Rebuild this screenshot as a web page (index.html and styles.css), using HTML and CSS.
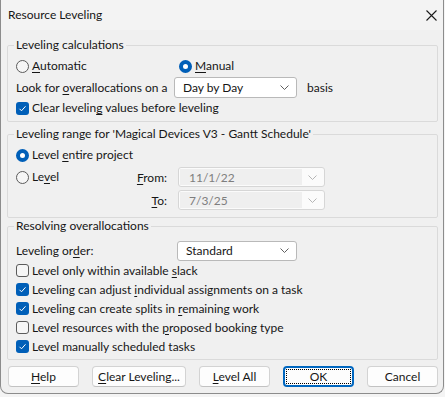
FILE: index.html
```html
<!DOCTYPE html>
<html>
<head>
<meta charset="utf-8">
<link rel="stylesheet" href="styles.css">
</head>
<body>
<div class="dialog">
  <div class="titlebar">
    <span class="title">Resource Leveling</span>
    <svg class="close" width="11" height="11" viewBox="0 0 11 11"><path d="M0.5 0.5 L10.5 10.5 M10.5 0.5 L0.5 10.5" stroke="#1b1b1b" stroke-width="1.1" fill="none"/></svg>
  </div>
  <div class="body">
    <fieldset class="group g1">
      <legend>Leveling calculations</legend>
      <div class="row radios">
        <label class="opt auto"><span class="radio"></span><span><u>A</u>utomatic</span></label>
        <label class="opt"><span class="radio on"></span><span><u>M</u>anual</span></label>
      </div>
      <div class="row look">
        <span class="look-label">Look for <u>o</u>verallocations on a</span>
        <div class="combo combo-day"><span>Day by Day</span><svg class="chev" width="9" height="5" viewBox="0 0 9 5"><path d="M0.5 0.5 L4.5 4.5 L8.5 0.5" stroke="#5f5f5f" fill="none"/></svg></div>
        <span class="basis">basis</span>
      </div>
      <div class="row">
        <label class="opt"><span class="check on"><svg width="13" height="13" viewBox="0 0 13 13"><path d="M3.5 6.8 L5.5 8.8 L9.5 4.3" stroke="#fff" stroke-width="1" fill="none"/></svg></span><span>Clear levelin<u>g</u> values before leveling</span></label>
      </div>
    </fieldset>

    <fieldset class="group g2">
      <legend>Leveling range for 'Magical Devices V3 - Gantt Schedule'</legend>
      <div class="row">
        <label class="opt"><span class="radio on"></span><span>Level <u>e</u>ntire project</span></label>
      </div>
      <div class="range">
        <label class="opt"><span class="radio"></span><span>Le<u>v</u>el</span></label>
        <span class="rlabel"><u>F</u>rom:</span>
        <div class="combo disabled"><span class="field">11/1/22</span><svg class="chev" width="9" height="5" viewBox="0 0 9 5"><path d="M0.5 0.5 L4.5 4.5 L8.5 0.5" stroke="#b5b5b5" fill="none"/></svg></div>
        <span></span>
        <span class="rlabel"><u>T</u>o:</span>
        <div class="combo disabled"><span class="field">7/3/25</span><svg class="chev" width="9" height="5" viewBox="0 0 9 5"><path d="M0.5 0.5 L4.5 4.5 L8.5 0.5" stroke="#b5b5b5" fill="none"/></svg></div>
      </div>
    </fieldset>

    <fieldset class="group g3">
      <legend>Resolving overallocations</legend>
      <div class="row order">
        <span class="order-label">Leveling or<u>d</u>er:</span>
        <div class="combo combo-order"><span>Standard</span><svg class="chev" width="9" height="5" viewBox="0 0 9 5"><path d="M0.5 0.5 L4.5 4.5 L8.5 0.5" stroke="#5f5f5f" fill="none"/></svg></div>
      </div>
      <div class="row crow">
        <label class="opt"><span class="check"></span><span>Level only within available <u>s</u>lack</span></label>
      </div>
      <div class="row crow">
        <label class="opt"><span class="check on"><svg width="13" height="13" viewBox="0 0 13 13"><path d="M3.5 6.8 L5.5 8.8 L9.5 4.3" stroke="#fff" stroke-width="1" fill="none"/></svg></span><span>Leveling can adjust <u>i</u>ndividual assignments on a task</span></label>
      </div>
      <div class="row crow">
        <label class="opt"><span class="check on"><svg width="13" height="13" viewBox="0 0 13 13"><path d="M3.5 6.8 L5.5 8.8 L9.5 4.3" stroke="#fff" stroke-width="1" fill="none"/></svg></span><span>Leveling can create splits in <u>r</u>emaining work</span></label>
      </div>
      <div class="row crow">
        <label class="opt"><span class="check"></span><span>Level resources with the <u>p</u>roposed booking type</span></label>
      </div>
      <div class="row crow">
        <label class="opt"><span class="check on"><svg width="13" height="13" viewBox="0 0 13 13"><path d="M3.5 6.8 L5.5 8.8 L9.5 4.3" stroke="#fff" stroke-width="1" fill="none"/></svg></span><span>Level manually scheduled tasks</span></label>
      </div>
    </fieldset>

    <div class="buttons">
      <button class="btn"><u>H</u>elp</button>
      <button class="btn wide"><u>C</u>lear Leveling...</button>
      <button class="btn"><u>L</u>evel All</button>
      <button class="btn default">OK</button>
      <button class="btn">Cancel</button>
    </div>
  </div>
</div>
</body>
</html>
```
FILE: styles.css
```css
html, body {
  margin: 0;
  padding: 0;
  background: #f4f4f4;
}
body {
  width: 445px;
  height: 397px;
  overflow: hidden;
  font-family: Lato, "Noto Sans", sans-serif;
  font-size: 12px;
  color: #161616;
}
u {
  text-decoration-thickness: 1px;
  text-underline-offset: 2px;
}
.dialog {
  width: 444px;
  height: 394px;
  box-sizing: border-box;
  background: #f0f0f0;
  border: 1px solid #8c8c8c;
  border-top: none;
  border-radius: 0 0 8px 8px;
  display: flex;
  flex-direction: column;
  overflow: hidden;
}
.titlebar {
  height: 30px;
  flex: none;
  display: flex;
  align-items: center;
  justify-content: space-between;
  padding: 0 6px 0 7px;
  background: #f3f3f3;
}
.title {
  font-size: 12px;
  line-height: 16px;
}
.close {
  display: block;
}
.body {
  padding: 7px 5px 0 6px;
  display: flex;
  flex-direction: column;
}
.group {
  margin: 0;
  padding: 3px 8px 3px;
  border: 1px solid #dadada;
  border-radius: 2px;
  min-width: 0;
}
.group legend {
  padding: 0 2px;
  margin-left: -2px;
  line-height: 16px;
  height: 16px;
}
.g2 {
  margin-top: 4px;
  padding-bottom: 6px;
}
.g3 {
  margin-top: 0;
  padding-top: 6px;
  padding-bottom: 3px;
}
.row {
  display: flex;
  align-items: center;
  height: 20px;
}
.opt {
  display: flex;
  align-items: center;
  gap: 3px;
  line-height: 16px;
}
.radios .auto {
  width: 163px;
}
.radio {
  width: 13px;
  height: 13px;
  box-sizing: border-box;
  border-radius: 50%;
  border: 1px solid #5b5b5b;
  background: #f6f6f6;
  flex: none;
}
.radio.on {
  border: 4px solid #005fb8;
  background: #ffffff;
}
.check {
  width: 13px;
  height: 13px;
  box-sizing: border-box;
  border-radius: 3px;
  border: 1px solid #5b5b5b;
  background: #f6f6f6;
  flex: none;
  display: flex;
}
.check.on {
  border: none;
  background: #005fb8;
}
.look {
  height: 22px;
}
.look-label {
  width: 158px;
  flex: none;
}
.combo {
  height: 21px;
  box-sizing: border-box;
  background: #ffffff;
  border: 1px solid #b9b9b9;
  border-radius: 3px;
  display: flex;
  align-items: center;
  justify-content: space-between;
  padding: 0 7px 0 8px;
  flex: none;
}
.chev {
  display: block;
}
.combo-day {
  width: 123px;
}
.basis {
  margin-left: 10px;
}
.range {
  display: grid;
  grid-template-columns: 112px 39px 147px;
  grid-template-rows: 22px 22px;
  row-gap: 1px;
  margin-top: 1px;
  align-items: center;
}
.rlabel {
  text-align: right;
}
.range .combo {
  margin-left: 11px;
  width: 147px;
  height: 20px;
}
.combo.disabled {
  background: #fbfbfb;
  border-color: #d6d6d6;
  padding: 1px 7px 1px 1px;
  align-items: stretch;
}
.combo.disabled .field {
  background: #efefef;
  color: #7e7e7e;
  flex: 1;
  margin-right: 6px;
  padding-left: 9px;
  display: flex;
  align-items: center;
}
.combo.disabled .chev {
  align-self: center;
}
.order {
  height: 21px;
}
.order-label {
  width: 161px;
  flex: none;
}
.combo-order {
  width: 120px;
  height: 20px;
}
.crow {
  height: 19px;
}
.buttons {
  display: flex;
  gap: 13px;
  margin-top: 6px;
  padding-left: 1px;
}
.btn {
  width: 71px;
  height: 21px;
  box-sizing: border-box;
  font-family: inherit;
  font-size: 12px;
  color: #161616;
  background: #fdfdfd;
  border: 1px solid #d3d3d3;
  border-bottom-color: #c2c2c2;
  border-radius: 4px;
  padding: 0;
  line-height: 16px;
}
.btn.wide {
  width: 94px;
}
.btn.default {
  border: 2px solid #0067c0;
  outline: 1px dotted #000;
  outline-offset: -4px;
}
```
